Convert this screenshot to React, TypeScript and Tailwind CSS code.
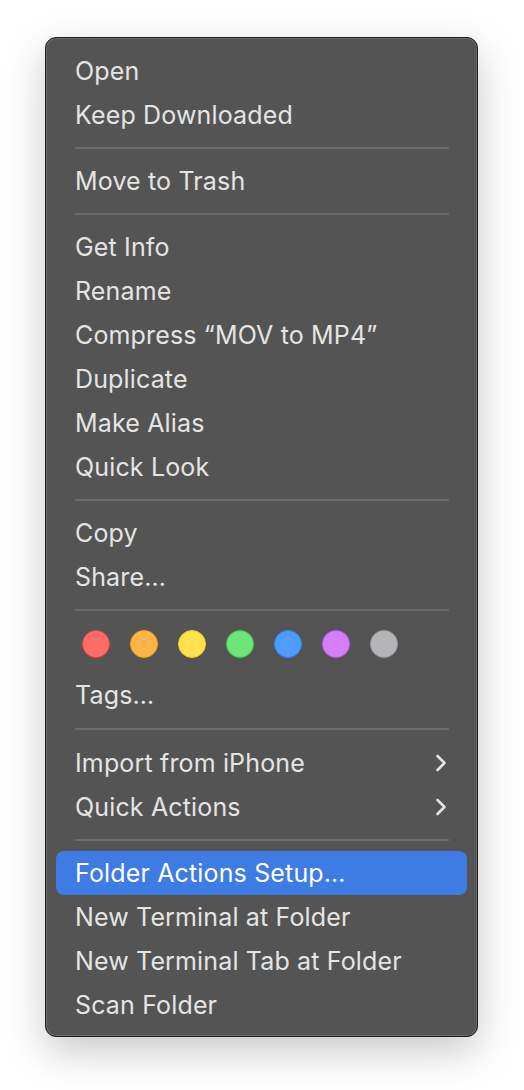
import React from "react";

type Row =
  | { kind: "item"; label: string; sub?: boolean; active?: boolean }
  | { kind: "sep"; tall?: boolean }
  | { kind: "tags" };

const rows: Row[] = [
  { kind: "item", label: "Open" },
  { kind: "item", label: "Keep Downloaded" },
  { kind: "sep" },
  { kind: "item", label: "Move to Trash" },
  { kind: "sep" },
  { kind: "item", label: "Get Info" },
  { kind: "item", label: "Rename" },
  { kind: "item", label: "Compress \u201CMOV to MP4\u201D" },
  { kind: "item", label: "Duplicate" },
  { kind: "item", label: "Make Alias" },
  { kind: "item", label: "Quick Look" },
  { kind: "sep" },
  { kind: "item", label: "Copy" },
  { kind: "item", label: "Share\u2026" },
  { kind: "sep" },
  { kind: "tags" },
  { kind: "item", label: "Tags\u2026" },
  { kind: "sep", tall: true },
  { kind: "item", label: "Import from iPhone", sub: true },
  { kind: "item", label: "Quick Actions", sub: true },
  { kind: "sep" },
  { kind: "item", label: "Folder Actions Setup\u2026", active: true },
  { kind: "item", label: "New Terminal at Folder" },
  { kind: "item", label: "New Terminal Tab at Folder" },
  { kind: "item", label: "Scan Folder" },
];

const dots = [
  { fill: "bg-[#ff6b66]", ring: "border-[#e8463f]" },
  { fill: "bg-[#ffb347]", ring: "border-[#f09e22]" },
  { fill: "bg-[#ffe34e]", ring: "border-[#f2cc1c]" },
  { fill: "bg-[#6ae67b]", ring: "border-[#3ccb50]" },
  { fill: "bg-[#4d9dff]", ring: "border-[#2a84f2]" },
  { fill: "bg-[#d67dfa]", ring: "border-[#bb5cef]" },
  { fill: "bg-[#b5b5b9]", ring: "border-[#9c9ca0]" },
];

function Chevron() {
  return (
    <svg width="12" height="18" viewBox="0 0 12 18" fill="none">
      <polyline
        points="2.5,2 9.5,9 2.5,16"
        stroke="#e2e2e2"
        strokeWidth="2.6"
        strokeLinecap="round"
        strokeLinejoin="round"
      />
    </svg>
  );
}

export default function App() {
  return (
    <div
      className="min-h-screen bg-white pt-[37px] pl-[45px]"
      style={{ fontFamily: "Inter, 'Noto Sans', sans-serif" }}
    >
      <div className="w-[433px] rounded-[11px] border border-[#1d1d1d] bg-[#545454] shadow-[inset_0_0_0_1px_#6c6c6c,0_14px_40px_rgba(0,0,0,0.22)] px-[10px] pt-[11px] pb-[9px]">
        {rows.map((r, i) => {
          if (r.kind === "sep") {
            return (
              <div
                key={i}
                className={`${r.tall ? "h-[24px]" : "h-[22px]"} flex items-center pl-[19px] pr-[18px]`}
              >
                <div className="h-[2px] w-full bg-[#6b6b6b]" />
              </div>
            );
          }
          if (r.kind === "tags") {
            return (
              <div key={i} className="h-[52px] pt-[9px] pl-[26px] flex items-start gap-[20px]">
                {dots.map((d, j) => (
                  <div
                    key={j}
                    className={`w-[28px] h-[28px] rounded-full border-[1.5px] ${d.fill} ${d.ring}`}
                  />
                ))}
              </div>
            );
          }
          return (
            <div
              key={i}
              className={`h-[44px] flex items-center justify-between pl-[19px] pr-[20px] rounded-[8px] text-[25px] tracking-[0.15px] ${
                r.active ? "bg-[#3e7be3] text-white" : "text-[#e4e4e4]"
              }`}
            >
              <span className="leading-none">{r.label}</span>
              {r.sub && <Chevron />}
            </div>
          );
        })}
      </div>
    </div>
  );
}
